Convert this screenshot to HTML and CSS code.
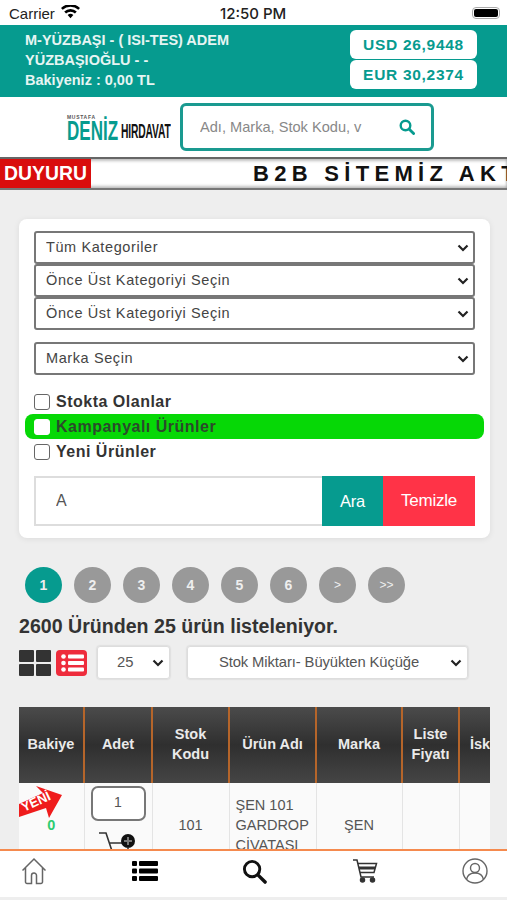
FILE: index.html
```html
<!DOCTYPE html>
<html lang="en">
<head>
    <meta charset="UTF-8">
    <meta name="viewport" content="width=device-width, initial-scale=1.0">
    <title>Deniz Hirdavat B2B</title>
    <link rel="stylesheet" href="styles.css">
</head>
<body>

    <!-- Status bar -->
    <div class="status-bar">
        <div class="status-left">
            <span>Carrier</span>
            <svg width="19" height="14" viewBox="0 0 20 14"><path d="M10 13.5 7 10.2a4.4 4.4 0 0 1 6 0zM5.3 8.500 3.4 6.4a9.6 9.6 0 0 1 13.2 0l-1.900 2.100a6.800 6.800 0 0 0-9.400 0zM1.800 4.700 0 2.700a14.600 14.600 0 0 1 20 0l-1.800 2a12 12 0 0 0-16.400 0z" fill="#000"/></svg>
        </div>
        <span class="status-time">12:50 PM</span>
        <div class="battery"><span></span></div>
    </div>

    <!-- Account header -->
    <div class="account">
        <div class="account-info">
            <div>M-YÜZBAŞI - ( ISI-TES) ADEM</div>
            <div>YÜZBAŞIOĞLU - -</div>
            <div>Bakiyeniz : 0,00 TL</div>
        </div>
        <div class="rates">
            <div class="rate">USD 26,9448</div>
            <div class="rate">EUR 30,2374</div>
        </div>
    </div>

    <!-- Logo and search -->
    <div class="brand-row">
        <div class="logo">
            <span class="logo-top">MUSTAFA</span>
            <div class="logo-words">
                <span class="logo-deniz">DENİZ</span>
                <span class="logo-hirdavat">HIRDAVAT</span>
            </div>
        </div>
        <div class="site-search">
            <input type="text" placeholder="Adı, Marka, Stok Kodu, v">
            <svg width="16" height="16" viewBox="0 0 16 16"><circle cx="6.5" cy="6.5" r="4.8" fill="none" stroke="#069b8f" stroke-width="2.4"/><path d="M10 10l4.600 4.600" stroke="#069b8f" stroke-width="2.800" stroke-linecap="round"/></svg>
        </div>
    </div>

    <!-- Announcement -->
    <div class="ticker">
        <div class="ticker-label">DUYURU</div>
        <div class="ticker-text">B2B SİTEMİZ AKTİF</div>
    </div>

    <div class="content">
        <!-- Filters -->
        <div class="filter-card">
            <div class="select-group">
                <div class="select-box">
                    <select><option>Tüm Kategoriler</option></select>
                    <svg class="chevron" width="12" height="8" viewBox="0 0 12 8"><path d="M1.500 1.500 6 6l4.500-4.500" fill="none" stroke="#222" stroke-width="2.200"/></svg>
                </div>
                <div class="select-box">
                    <select><option>Önce Üst Kategoriyi Seçin</option></select>
                    <svg class="chevron" width="12" height="8" viewBox="0 0 12 8"><path d="M1.500 1.500 6 6l4.500-4.500" fill="none" stroke="#222" stroke-width="2.200"/></svg>
                </div>
                <div class="select-box">
                    <select><option>Önce Üst Kategoriyi Seçin</option></select>
                    <svg class="chevron" width="12" height="8" viewBox="0 0 12 8"><path d="M1.500 1.500 6 6l4.500-4.500" fill="none" stroke="#222" stroke-width="2.200"/></svg>
                </div>
            </div>
            <div class="select-box brand-select">
                <select><option>Marka Seçin</option></select>
                <svg class="chevron" width="12" height="8" viewBox="0 0 12 8"><path d="M1.500 1.500 6 6l4.500-4.500" fill="none" stroke="#222" stroke-width="2.200"/></svg>
            </div>

            <div class="checks">
                <label class="check"><input type="checkbox"><span>Stokta Olanlar</span></label>
                <label class="check check-green"><input type="checkbox"><span>Kampanyalı Ürünler</span></label>
                <label class="check"><input type="checkbox"><span>Yeni Ürünler</span></label>
            </div>

            <div class="search-row">
                <input type="text" value="A">
                <button class="btn-search">Ara</button>
                <button class="btn-clear">Temizle</button>
            </div>
        </div>

        <!-- Pagination -->
        <div class="pager">
            <a class="active">1</a>
            <a>2</a>
            <a>3</a>
            <a>4</a>
            <a>5</a>
            <a>6</a>
            <a class="small">&gt;</a>
            <a class="small">&gt;&gt;</a>
        </div>

        <div class="result-count">2600 Üründen 25 ürün listeleniyor.</div>

        <div class="toolbar">
            <div class="grid-icon"><span></span><span></span><span></span><span></span></div>
            <div class="list-icon">
                <svg width="24" height="20" viewBox="0 0 24 20" fill="#fff"><circle cx="3.500" cy="3.500" r="2.300"/><circle cx="3.500" cy="10" r="2.300"/><circle cx="3.500" cy="16.500" r="2.300"/><rect x="8" y="1.500" width="16" height="4" rx="1"/><rect x="8" y="8" width="16" height="4" rx="1"/><rect x="8" y="14.500" width="16" height="4" rx="1"/></svg>
            </div>
            <div class="select-box page-size">
                <select><option>25</option></select>
                <svg class="chevron" width="12" height="8" viewBox="0 0 12 8"><path d="M1.500 1.500 6 6l4.500-4.500" fill="none" stroke="#222" stroke-width="2.200"/></svg>
            </div>
            <div class="select-box sort">
                <select><option>Stok Miktarı- Büyükten Küçüğe</option></select>
                <svg class="chevron" width="12" height="8" viewBox="0 0 12 8"><path d="M1.500 1.500 6 6l4.500-4.500" fill="none" stroke="#222" stroke-width="2.200"/></svg>
            </div>
        </div>

        <!-- Products -->
        <div class="table-wrap">
            <table class="products">
                <colgroup>
                    <col class="col-bakiye">
                    <col class="col-adet">
                    <col class="col-stok">
                    <col class="col-urun">
                    <col class="col-marka">
                    <col class="col-fiyat">
                    <col class="col-isk">
                </colgroup>
                <thead>
                    <tr>
                        <th>Bakiye</th>
                        <th>Adet</th>
                        <th>Stok<br>Kodu</th>
                        <th>Ürün Adı</th>
                        <th>Marka</th>
                        <th>Liste<br>Fiyatı</th>
                        <th class="cut">İskonto</th>
                    </tr>
                </thead>
                <tbody>
                    <tr>
                        <td class="stock-cell">
                            <svg class="new-badge" width="44" height="32" viewBox="0 0 44 32"><path d="M0 18 24 7 17 0 43 9 30 32 27 22 0 31z" fill="#ef1c1c"/><text x="0" y="0" transform="translate(5 26) rotate(-25)" fill="#fff" font-family="Liberation Sans" font-size="13" font-weight="700">YENİ</text></svg>
                            <span class="stock-zero">0</span>
                        </td>
                        <td class="qty-cell">
                            <input class="qty" type="text" value="1">
                            <svg class="add-cart" width="42" height="32" viewBox="0 0 42 32"><path d="M1 2h7l6 18M11 12h17" fill="none" stroke="#333" stroke-width="1.600"/><circle cx="30" cy="10" r="7" fill="#111"/><path d="M26 10h8M30 6v8" stroke="#777" stroke-width="2"/><path d="M30 16v8" stroke="#333" stroke-width="1.600"/></svg>
                        </td>
                        <td>101</td>
                        <td class="name-cell">ŞEN 101 GARDROP CİVATASI</td>
                        <td>ŞEN</td>
                        <td></td>
                        <td></td>
                    </tr>
                </tbody>
            </table>
        </div>
    </div>

    <!-- Bottom navigation -->
    <div class="bottom-nav">
        <svg width="26" height="28" viewBox="0 0 26 28" fill="none" stroke="#666" stroke-width="1.500"><path d="M1.500 13.500 13 2l11.500 11.500M4.500 11v14a1.500 1.500 0 0 0 1.500 1.500h4.500v-8a2.500 2.500 0 0 1 5 0v8H20a1.500 1.500 0 0 0 1.500-1.500V11"/></svg>
        <svg width="26" height="20" viewBox="0 0 26 20" fill="#000"><rect x="0" y="0" width="5" height="5" rx="1"/><rect x="0" y="7.500" width="5" height="5" rx="1"/><rect x="0" y="15" width="5" height="5" rx="1"/><rect x="7" y="0" width="19" height="5" rx="1"/><rect x="7" y="7.500" width="19" height="5" rx="1"/><rect x="7" y="15" width="19" height="5" rx="1"/></svg>
        <svg width="25" height="25" viewBox="0 0 26 26" fill="none" stroke="#111"><circle cx="10.500" cy="10.500" r="8" stroke-width="3"/><path d="M16.500 16.500 24 24" stroke-width="3.600" stroke-linecap="round"/></svg>
        <svg width="26" height="24" viewBox="0 0 26 24" fill="none" stroke="#333" stroke-width="1.500"><path d="M1 1h4l4 17h13"/><path d="M6 4.500h18.500l-2.500 9H8"/><path d="M7 9h16" stroke-width="3"/><circle cx="10.500" cy="21" r="2" fill="#333"/><circle cx="20.500" cy="21" r="2" fill="#333"/></svg>
        <svg width="26" height="26" viewBox="0 0 26 26" fill="none" stroke="#666" stroke-width="1.400"><circle cx="13" cy="13" r="12"/><circle cx="13" cy="10" r="4.500"/><path d="M4.500 21.500c1-5 4.500-6.500 8.500-6.500s7.500 1.500 8.500 6.500"/></svg>
    </div>

</body>
</html>
```

FILE: styles.css
```css
html, body {
    height: 900px;
    overflow: hidden;
}
body {
    font-family: "Liberation Sans", Arial, sans-serif;
    margin: 0;
    background-color: #eeeeee;
    color: #333;
}

/* Status bar */
.status-bar {
    height: 25px;
    box-sizing: border-box;
    background-color: #fff;
    display: flex;
    justify-content: space-between;
    align-items: center;
    padding: 1px 7px 0 9px;
    font-size: 15px;
    color: #222;
    position: relative;
}
.status-left {
    display: flex;
    align-items: center;
    gap: 6px;
}
.status-left svg {
    margin-top: -3px;
}
.status-time {
    font-family: "Inter", sans-serif;
    font-weight: 500;
    font-size: 15px;
    position: absolute;
    left: 220px;
}
.battery {
    width: 28px;
    height: 12px;
    border: 1px solid #aaa;
    border-radius: 4px;
    padding: 1px;
    box-sizing: border-box;
}
.battery span {
    display: block;
    height: 100%;
    background-color: #000;
    border-radius: 2px;
}

/* Account header */
.account {
    height: 72px;
    box-sizing: border-box;
    background-color: #069b8f;
    display: flex;
    justify-content: space-between;
    padding: 5px 30px 7px 25px;
    color: #e6f5f3;
}
.account-info {
    font-size: 14.5px;
    font-weight: 700;
    line-height: 20px;
}
.rates {
    display: flex;
    flex-direction: column;
    gap: 1px;
}
.rate {
    width: 127px;
    height: 29px;
    background-color: #fff;
    border-radius: 6px;
    color: #069b8f;
    font-size: 15.5px;
    font-weight: 700;
    letter-spacing: 0.7px;
    text-align: center;
    line-height: 29px;
}

/* Logo and search */
.brand-row {
    height: 60px;
    background-color: #fff;
    display: flex;
    align-items: center;
    padding-left: 67px;
    box-sizing: border-box;
    gap: 9px;
}
.logo {
    width: 104px;
    display: flex;
    flex-direction: column;
    margin-top: 2px;
}
.logo-top {
    font-size: 5px;
    font-weight: 700;
    letter-spacing: 0.7px;
    color: #555;
    line-height: 5px;
}
.logo-words {
    display: flex;
    align-items: flex-end;
    line-height: 20px;
    height: 21px;
}
.logo-deniz {
    font-size: 27px;
    font-weight: 700;
    color: #069b8f;
    display: inline-block;
    width: 54px;
    transform: scaleX(0.63);
    transform-origin: left bottom;
    white-space: nowrap;
}
.logo-hirdavat {
    font-size: 21px;
    font-weight: 700;
    color: #111;
    display: inline-block;
    transform: scaleX(0.49);
    transform-origin: left bottom;
    white-space: nowrap;
    letter-spacing: -0.3px;
}
.site-search {
    width: 254px;
    height: 48px;
    box-sizing: border-box;
    border: 3px solid #1a9a90;
    border-radius: 6px;
    display: flex;
    align-items: center;
    padding: 0 16px 0 17px;
    gap: 16px;
}
.site-search input {
    flex: 1;
    min-width: 0;
    border: none;
    outline: none;
    padding: 0;
    font-family: "Liberation Sans", Arial, sans-serif;
    font-size: 14.6px;
}
.site-search input::placeholder {
    color: #888;
}

/* Announcement */
.ticker {
    height: 33px;
    box-sizing: border-box;
    background-color: #fff;
    border-top: 2px solid #666;
    border-bottom: 2px solid #777;
    box-shadow: inset 0 2px 3px rgba(0, 0, 0, 0.25), inset 0 -2px 3px rgba(0, 0, 0, 0.25);
    display: flex;
    align-items: center;
    overflow: hidden;
}
.ticker-label {
    width: 91px;
    height: 33px;
    flex-shrink: 0;
    background-color: #d90d0d;
    color: #fff;
    font-size: 19.4px;
    font-weight: 700;
    text-align: center;
    line-height: 33px;
}
.ticker-text {
    margin-left: 162px;
    white-space: nowrap;
    font-size: 22px;
    font-weight: 700;
    letter-spacing: 5.3px;
    color: #111;
}

/* Main content */
.content {
    padding: 29px 17px 0 19px;
}

/* Filters */
.filter-card {
    background-color: #fff;
    border-radius: 8px;
    box-shadow: 0 1px 6px rgba(0, 0, 0, 0.08);
    padding: 12px 15px;
    height: 319px;
    box-sizing: border-box;
}
.select-box {
    position: relative;
}
.select-box select {
    display: block;
    width: 100%;
    height: 33px;
    box-sizing: border-box;
    appearance: none;
    -webkit-appearance: none;
    background-color: #fff;
    border: 2px solid #777;
    border-radius: 3px;
    padding: 0 10px 2px;
    font-family: "Liberation Sans", Arial, sans-serif;
    font-size: 14.5px;
    letter-spacing: 0.6px;
    color: #444;
}
.chevron {
    position: absolute;
    right: 6px;
    top: 50%;
    margin-top: -4px;
}
.brand-select {
    margin-top: 12px;
}
.checks {
    margin: 14px -9px 0;
}
.check {
    display: flex;
    align-items: center;
    gap: 6px;
    height: 25px;
    padding-left: 9px;
    font-size: 16px;
    font-weight: 700;
    letter-spacing: 0.5px;
    color: #333;
}
.check input {
    width: 16px;
    height: 16px;
    margin: 0;
    appearance: none;
    -webkit-appearance: none;
    background-color: #fff;
    border: 1.5px solid #666;
    border-radius: 3px;
}
.check-green {
    background-color: #06d806;
    border-radius: 8px;
    color: #2b4a2b;
}
.check-green input {
    border-color: #fff;
}
.search-row {
    display: flex;
    height: 50px;
    margin-top: 12px;
}
.search-row input {
    flex: 1;
    min-width: 0;
    box-sizing: border-box;
    border: 2px solid #ddd;
    border-right: none;
    outline: none;
    padding: 0 20px;
    font-family: "Liberation Sans", Arial, sans-serif;
    font-size: 16px;
    color: #555;
}
.search-row button {
    border: none;
    color: #fff;
    font-family: "Liberation Sans", Arial, sans-serif;
    font-size: 16.5px;
    padding: 0;
    letter-spacing: -0.2px;
}
.btn-search {
    width: 61px;
    background-color: #069b8f;
}
.search-row .btn-clear {
    width: 92px;
    background-color: #ff3347;
    font-size: 17px;
}

/* Pagination */
.pager {
    display: flex;
    gap: 12px;
    margin: 29px 0 0 6px;
}
.pager a {
    width: 37px;
    height: 36px;
    border-radius: 50%;
    background-color: #999;
    color: #eee;
    font-size: 14px;
    font-weight: 700;
    text-align: center;
    line-height: 36px;
}
.pager a.active {
    background-color: #069b8f;
}
.pager a.small {
    font-size: 12px;
    font-weight: 400;
}
.result-count {
    font-size: 19.6px;
    font-weight: 700;
    color: #333;
    margin-top: 11px;
    line-height: 24px;
}

/* Toolbar */
.toolbar {
    display: flex;
    align-items: center;
    margin-top: 8px;
}
.grid-icon {
    display: grid;
    grid-template-columns: 15px 15px;
    grid-template-rows: 12px 12px;
    gap: 2px;
}
.grid-icon span {
    background-color: #333;
    border-radius: 1px;
}
.list-icon {
    width: 31px;
    height: 26px;
    background-color: #ee2c3c;
    border-radius: 4px;
    margin-left: 5px;
    display: flex;
    align-items: center;
    justify-content: center;
}
.page-size, .sort {
    box-shadow: 0 0 2px rgba(0, 0, 0, 0.2);
    border-radius: 3px;
}
.page-size {
    width: 73px;
    margin-left: 10px;
}
.sort {
    width: 281px;
    margin-left: 17px;
}
.page-size select, .sort select {
    border: 1px solid #ddd;
    font-size: 14.8px;
    letter-spacing: 0;
    color: #555;
}
.sort select {
    text-align: center;
    letter-spacing: -0.1px;
    padding-right: 27px;
}
.page-size select {
    padding: 0 0 2px 19px;
}

/* Products */
.table-wrap {
    width: 471px;
    margin-top: 28px;
    overflow: hidden;
}
.products {
    border-collapse: collapse;
    table-layout: fixed;
    width: 540px;
}
.col-bakiye { width: 65px; }
.col-adet { width: 68px; }
.col-stok { width: 77px; }
.col-urun { width: 87px; }
.col-marka { width: 86px; }
.col-fiyat { width: 57px; }
.col-isk { width: 100px; }
.products th {
    height: 73px;
    padding: 0 0 3px;
    background: linear-gradient(#4b4b4b, #2f2f2f 50%, #454545);
    border-right: 2px solid #b5652a;
    color: #eaeaea;
    font-size: 14.5px;
    line-height: 20px;
    font-weight: 700;
    text-align: center;
}
.products th.cut {
    text-align: left;
    padding-left: 10px;
    border-right: none;
}
.products td {
    background-color: #fafafa;
    border-right: 1px solid #e4e4e4;
    color: #555;
    font-size: 14.5px;
    line-height: 20px;
    text-align: center;
    padding: 0;
    height: 84px;
    vertical-align: middle;
}
.products td.name-cell {
    text-align: left;
    padding: 0 4px 0 6px;
}
.stock-cell {
    position: relative;
}
.new-badge {
    position: absolute;
    left: 0;
    top: 3px;
}
.stock-zero {
    color: #2ecc71;
    font-weight: 700;
}
.qty-cell {
    vertical-align: top !important;
}
.qty {
    display: block;
    width: 55px;
    height: 35px;
    box-sizing: border-box;
    margin: 3px auto 0;
    border: 2px solid #777;
    border-radius: 7px;
    background-color: #fff;
    text-align: center;
    font-family: "Liberation Sans", Arial, sans-serif;
    font-size: 14px;
    color: #555;
    padding: 0 0 4px;
}
.add-cart {
    display: block;
    margin: 10px 0 0 13px;
}

/* Bottom navigation */
.bottom-nav {
    position: fixed;
    left: 0;
    right: 0;
    top: 849px;
    height: 48px;
    box-sizing: border-box;
    background-color: #fff;
    border-top: 2px solid #f58a4e;
    display: flex;
    justify-content: space-between;
    align-items: center;
    padding: 0 19px 6px 21px;
}
```
